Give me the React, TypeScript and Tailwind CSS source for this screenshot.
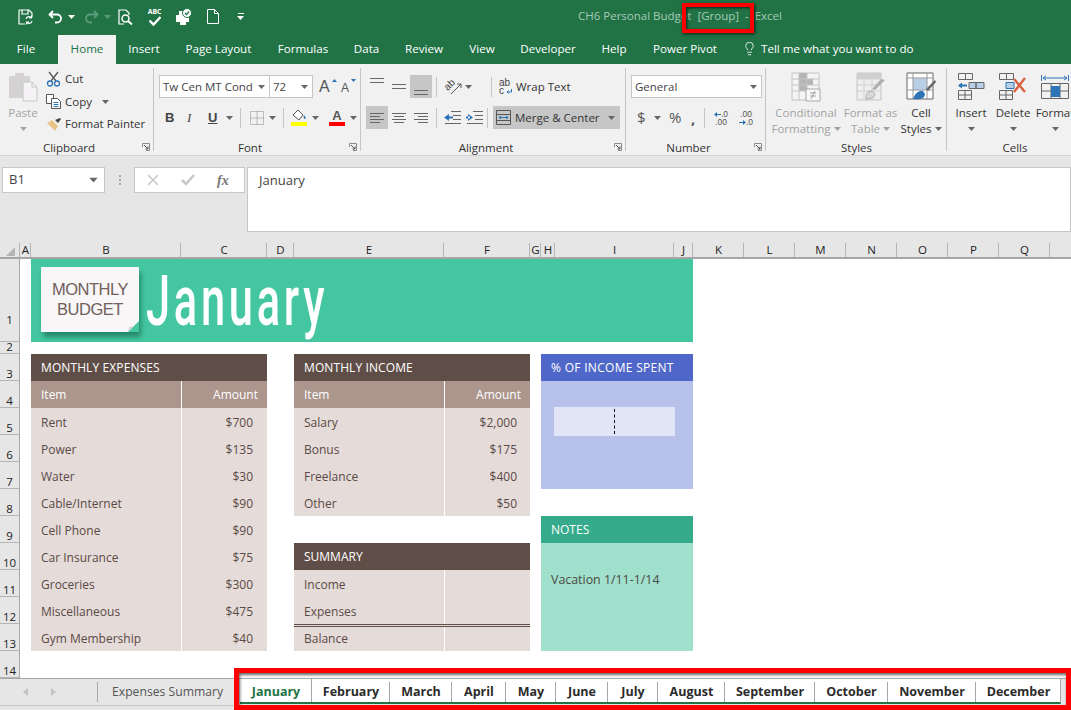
import React from 'react';
import { Lightbulb } from 'lucide-react';

const tabs = [
  { label: 'Insert', w: 'w-[56px]' },
  { label: 'Page Layout', w: 'w-[93px]' },
  { label: 'Formulas', w: 'w-[76px]' },
  { label: 'Data', w: 'w-[51px]' },
  { label: 'Review', w: 'w-[64px]' },
  { label: 'View', w: 'w-[52px]' },
  { label: 'Developer', w: 'w-[80px]' },
  { label: 'Help', w: 'w-[52px]' },
  { label: 'Power Pivot', w: 'w-[90px]' },
];

const columns = [
  { label: 'A', w: 'w-[11px]' },
  { label: 'B', w: 'w-[150px]' },
  { label: 'C', w: 'w-[86px]' },
  { label: 'D', w: 'w-[27px]' },
  { label: 'E', w: 'w-[150px]' },
  { label: 'F', w: 'w-[86px]' },
  { label: 'G', w: 'w-[11px]' },
  { label: 'H', w: 'w-[14px]' },
  { label: 'I', w: 'w-[119px]' },
  { label: 'J', w: 'w-[19px]' },
  { label: 'K', w: 'w-[51px]' },
  { label: 'L', w: 'w-[51px]' },
  { label: 'M', w: 'w-[51px]' },
  { label: 'N', w: 'w-[51px]' },
  { label: 'O', w: 'w-[51px]' },
  { label: 'P', w: 'w-[51px]' },
  { label: 'Q', w: 'w-[51px]' },
];

const rowHeads = [
  { label: '1', cls: 'h-[83px] pb-[15px]' },
  { label: '2', cls: 'h-[12px]' },
  ...Array.from({ length: 12 }, (_, i) => ({ label: String(i + 3), cls: 'h-[27px]' })),
];

const expenses = [
  ['Rent', '$700'],
  ['Power', '$135'],
  ['Water', '$30'],
  ['Cable/Internet', '$90'],
  ['Cell Phone', '$90'],
  ['Car Insurance', '$75'],
  ['Groceries', '$300'],
  ['Miscellaneous', '$475'],
  ['Gym Membership', '$40'],
];

const income = [
  ['Salary', '$2,000'],
  ['Bonus', '$175'],
  ['Freelance', '$400'],
  ['Other', '$50'],
];

const sheets = [
  { label: 'January', w: 'w-[72px]' },
  { label: 'February', w: 'w-[78px]' },
  { label: 'March', w: 'w-[62px]' },
  { label: 'April', w: 'w-[54px]' },
  { label: 'May', w: 'w-[50px]' },
  { label: 'June', w: 'w-[52px]' },
  { label: 'July', w: 'w-[50px]' },
  { label: 'August', w: 'w-[67px]' },
  { label: 'September', w: 'w-[90px]' },
  { label: 'October', w: 'w-[73px]' },
  { label: 'November', w: 'w-[88px]' },
  { label: 'December', w: 'w-[85px]' },
];

function Caret({ color = '#666666', className = '' }: { color?: string; className?: string }) {
  return (
    <svg width="7" height="4" viewBox="0 0 7 4" className={`shrink-0 ${className}`}>
      <path d="M0 0h7L3.5 4z" fill={color} />
    </svg>
  );
}

function Launcher() {
  return (
    <svg width="8" height="8" viewBox="0 0 8 8" className="absolute right-[3px] bottom-0">
      <path d="M.5 4V.5H7.5V7.5H4" fill="none" stroke="#8a8a8a" />
      <path d="M2 2l4 4M6 3.5V6H3.5" fill="none" stroke="#555" />
    </svg>
  );
}

function Sep() {
  return <div className="w-px h-[20px] bg-[#c6c6c6] shrink-0" />;
}

function Group({ label, w, launcher, children }: { label: string; w: string; launcher?: boolean; children: React.ReactNode }) {
  return (
    <div className={`${w} shrink-0 relative flex flex-col border-r border-[#c6c6c6] my-[4px] mr-[1px]`}>
      <div className="flex-1 min-h-0">{children}</div>
      <div className={`h-[10px] text-center text-[11.5px] leading-[14px] text-[#333] ${launcher ? 'pr-[15px]' : ''}`}>{label}</div>
      {launcher && <Launcher />}
    </div>
  );
}

function QuickIcons() {
  return (
    <div className="flex items-center h-[33px] pl-[18px]">
      <svg width="16" height="16" viewBox="0 0 16 16" fill="none" stroke="#fff" strokeWidth="1.2">
        <path d="M1 1h10l3 3v4M1 1v14h6M4 1v4h6V1" />
        <path d="M8 10a3 3 0 0 1 5.5-1M14 12a3 3 0 0 1-5.5 1M13.5 6.5V9H11M8.5 15.5V13H11" />
      </svg>
      <svg width="15" height="14" viewBox="0 0 15 14" fill="none" stroke="#fff" strokeWidth="1.8" className="ml-[14px]">
        <path d="M5 1L1.5 4.5 5 8M2 4.5h7a4 4 0 0 1 0 8H7" />
      </svg>
      <Caret color="#fff" className="ml-[5px]" />
      <svg width="15" height="14" viewBox="0 0 15 14" fill="none" stroke="#5c9b7b" strokeWidth="1.8" className="ml-[9px]">
        <path d="M10 1l3.5 3.5L10 8M13 4.5H6a4 4 0 0 0 0 8h2" />
      </svg>
      <Caret color="#5c9b7b" className="ml-[5px]" />
      <svg width="15" height="16" viewBox="0 0 15 16" fill="none" stroke="#fff" strokeWidth="1.2" className="ml-[7px]">
        <path d="M6 15H1V1h7l3 3v2" />
        <circle cx="7.5" cy="9.5" r="3.5" strokeWidth="1.5" />
        <path d="M10 12l4 3.5" strokeWidth="2" />
      </svg>
      <div className="ml-[13px] w-[17px] flex flex-col items-center">
        <span className="text-[7px] leading-[8px] font-bold text-white tracking-tight">ABC</span>
        <svg width="14" height="10" viewBox="0 0 14 10" fill="none" stroke="#fff" strokeWidth="2.4">
          <path d="M1.5 4.5L5.5 8.5 12.5 1" />
        </svg>
      </div>
      <svg width="18" height="17" viewBox="0 0 18 17" className="ml-[12px]">
        <path d="M1 7h3V3h6v4h4v7H11v3H5v-3H1z" fill="#fff" />
        <circle cx="12" cy="5" r="4.5" fill="#fff" stroke="#217346" />
        <path d="M10 5l1.5 1.5L14 3.5" fill="none" stroke="#217346" strokeWidth="1.3" />
      </svg>
      <svg width="12" height="15" viewBox="0 0 12 15" fill="none" stroke="#fff" className="ml-[14px]">
        <path d="M.5.5h7l4 4v10H.5zM7.5.5v4h4" />
      </svg>
      <div className="ml-[18px] flex flex-col items-center gap-[2px]">
        <div className="w-[6px] h-px bg-white" />
        <Caret color="#fff" />
      </div>
    </div>
  );
}

function AlignIcon({ lines, active }: { lines: string[]; active?: boolean }) {
  return (
    <div className={`w-[22px] h-[23px] flex flex-col justify-center gap-[2px] px-[4px] ${active ? 'bg-[#c6c6c6]' : ''}`}>
      {lines.map((c, i) => (
        <div key={i} className={`h-px bg-[#666] ${c}`} />
      ))}
    </div>
  );
}

function VAlignIcon({ pos, active }: { pos: string; active?: boolean }) {
  return (
    <div className={`w-[22px] h-[23px] flex flex-col gap-[3px] px-[4px] py-[3px] ${pos} ${active ? 'bg-[#c6c6c6]' : ''}`}>
      <div className="h-px bg-[#666]" />
      <div className="h-px bg-[#666]" />
    </div>
  );
}

function Clipboard() {
  return (
    <div className="flex h-full">
      <div className="w-[46px] flex flex-col items-center pt-[4px]">
        <svg width="30" height="30" viewBox="0 0 30 30">
          <path d="M1 4h6V1h9v3h6v22H1z" fill="#d4d2d3" />
          <path d="M15 10h9l5 5v14H15z" fill="#f5f3f5" stroke="#c8c8c8" />
          <path d="M24 10v5h5" fill="none" stroke="#c8c8c8" />
        </svg>
        <div className="text-[#a3a3a3] text-[11.5px] leading-[16px] mt-[3px]">Paste</div>
        <Caret color="#a3a3a3" className="mt-[6px]" />
      </div>
      <div className="flex flex-col -mt-[1px] text-[11.5px] text-[#333]">
        <div className="flex items-center h-[23px] gap-[3px]">
          <svg width="16" height="16" viewBox="0 0 16 16" fill="none">
            <path d="M3 1l7 9M12 1L5 10" stroke="#555" strokeWidth="1.3" />
            <circle cx="4" cy="12.5" r="2.5" stroke="#2b73b7" strokeWidth="1.3" />
            <circle cx="11" cy="12.5" r="2.5" stroke="#2b73b7" strokeWidth="1.3" />
          </svg>
          <span>Cut</span>
        </div>
        <div className="flex items-center h-[23px] gap-[3px]">
          <svg width="16" height="15" viewBox="0 0 16 15" fill="none" stroke="#555">
            <path d="M.5.5h7v9h-7z" fill="#fff" />
            <path d="M5.5 4.5h6l3 3v7h-9z" fill="#fff" />
            <path d="M7.5 8.5h5M7.5 10.5h5M7.5 12.5h5" stroke="#2b73b7" />
          </svg>
          <span>Copy</span>
          <Caret className="ml-[7px]" />
        </div>
        <div className="flex items-center h-[22px] gap-[3px]">
          <svg width="16" height="15" viewBox="0 0 16 15">
            <path d="M9 3l3 3 3-4-1-1z" fill="#444" />
            <path d="M6 3l6 6-3 5-8-8z" fill="#e7c48a" />
          </svg>
          <span className="whitespace-nowrap">Format Painter</span>
        </div>
      </div>
    </div>
  );
}

function Font() {
  return (
    <div className="h-full pl-[4px] pt-[7px]">
      <div className="flex items-center h-[23px]">
        <div className="w-[111px] h-[23px] bg-white border border-[#c6c6c6] flex items-center justify-between pl-[3px] pr-[4px] text-[11.5px] text-[#444] whitespace-nowrap">
          Tw Cen MT Cond <Caret />
        </div>
        <div className="w-[44px] h-[23px] -ml-px bg-white border border-[#c6c6c6] flex items-center justify-between pl-[3px] pr-[4px] text-[11.5px] text-[#444]">
          72 <Caret />
        </div>
        <div className="ml-[6px] w-[15px] relative text-[16px] leading-[16px] text-[#555] font-['Liberation_Sans',sans-serif]">
          A
          <svg width="5" height="3" viewBox="0 0 5 3" className="absolute right-[-3px] top-0"><path d="M0 3h5L2.5 0z" fill="#2b73b7" /></svg>
        </div>
        <div className="ml-[7px] w-[15px] relative text-[12px] leading-[14px] pt-[2px] text-[#555] font-['Liberation_Sans',sans-serif]">
          A
          <svg width="5" height="3" viewBox="0 0 5 3" className="absolute right-[0px] top-0"><path d="M0 0h5L2.5 3z" fill="#2b73b7" /></svg>
        </div>
      </div>
      <div className="flex items-center h-[23px] mt-[8px] text-[#444]">
        <span className="w-[10px] ml-[6px] text-[13px] font-bold font-['Liberation_Sans',sans-serif]">B</span>
        <span className="w-[10px] ml-[12px] text-[13px] italic font-['Liberation_Serif',serif]">I</span>
        <span className="w-[10px] ml-[11px] text-[13px] font-bold underline font-['Liberation_Sans',sans-serif]">U</span>
        <Caret className="ml-[8px]" />
        <div className="ml-[7px]"><Sep /></div>
        <svg width="14" height="14" viewBox="0 0 14 14" fill="none" stroke="#888" strokeDasharray="1 1" className="ml-[9px]">
          <path d="M.5.5h13v13H.5zM7 .5v13M.5 7h13" />
        </svg>
        <Caret className="ml-[5px]" />
        <div className="ml-[7px]"><Sep /></div>
        <div className="ml-[7px] w-[16px] flex flex-col items-center">
          <svg width="16" height="11" viewBox="0 0 16 11">
            <path d="M7 0l5 5-4 5-6-5z" fill="#fff" stroke="#555" />
            <path d="M13 5c2 2 2 4 1 4s-2-2-1-4z" fill="#2b73b7" />
          </svg>
          <div className="w-[16px] h-[4px] bg-[#ffff00] mt-[1px]" />
        </div>
        <Caret className="ml-[5px]" />
        <div className="ml-[10px] w-[16px] flex flex-col items-center">
          <span className="text-[13px] leading-[11px] font-bold text-[#555] font-['Liberation_Sans',sans-serif]">A</span>
          <div className="w-[16px] h-[4px] bg-[#ff0000] mt-[1px]" />
        </div>
        <Caret className="ml-[5px]" />
      </div>
    </div>
  );
}

function Alignment() {
  return (
    <div className="h-full pl-[4px] pt-[7px]">
      <div className="flex items-center h-[23px]">
        <VAlignIcon pos="justify-start" />
        <VAlignIcon pos="justify-center" />
        <VAlignIcon pos="justify-end" active />
        <div className="ml-[4px]"><Sep /></div>
        <div className="relative ml-[7px] w-[18px] h-[16px]">
          <span className="absolute left-0 top-[1px] -rotate-45 text-[10px] leading-[10px] text-[#444] font-['Liberation_Sans',sans-serif]">ab</span>
          <svg width="18" height="16" viewBox="0 0 18 16" fill="none" stroke="#555" className="absolute inset-0">
            <path d="M7 15L17 5M13 5h4v4" />
          </svg>
        </div>
        <Caret className="ml-[3px]" />
        <div className="ml-[19px]"><Sep /></div>
        <div className="ml-[7px] flex items-center gap-[4px] text-[11.5px] text-[#333] whitespace-nowrap">
          <div className="relative w-[13px] h-[16px] text-[10px] leading-[8px] text-[#444] font-['Liberation_Sans',sans-serif]">
            ab<br />c
            <svg width="6" height="5" viewBox="0 0 6 5" fill="none" stroke="#2b73b7" className="absolute right-0 bottom-[1px]">
              <path d="M5.5 0v3H1M2.5 1.500L1 3l1.500 1.500" />
            </svg>
          </div>
          Wrap Text
        </div>
      </div>
      <div className="flex items-center h-[23px] mt-[8px]">
        <AlignIcon active lines={['w-full', 'w-[10px]', 'w-full', 'w-[10px]']} />
        <AlignIcon lines={['w-full', 'w-[10px] self-center', 'w-full', 'w-[10px] self-center']} />
        <AlignIcon lines={['w-full', 'w-[10px] self-end', 'w-full', 'w-[10px] self-end']} />
        <div className="ml-[4px]"><Sep /></div>
        <svg width="17" height="13" viewBox="0 0 17 13" fill="none" className="ml-[7px]">
          <path d="M7 .5h10M9 4.5h8M9 8.5h8M1 12.5h16" stroke="#666" />
          <path d="M0 6.5L5 3v7z M4 5.5h5v2H4z" fill="#2b73b7" />
        </svg>
        <svg width="17" height="13" viewBox="0 0 17 13" fill="none" className="ml-[5px]">
          <path d="M7 .5h10M9 4.5h8M9 8.5h8M1 12.5h16" stroke="#666" />
          <path d="M7 6.5L2 3v7z M0 5.5h4v2H0z" fill="#2b73b7" />
        </svg>
        <div className="ml-[4px]"><Sep /></div>
        <div className="ml-[5px] w-[127px] h-[23px] bg-[#c6c6c6] flex items-center pl-[3px] text-[11.5px] text-[#333] whitespace-nowrap">
          <svg width="15" height="15" viewBox="0 0 15 15" fill="none" stroke="#555" className="mr-[4px]">
            <path d="M.5.5h14v14H.5zM.5 4.5h14M.5 10.5h14" />
            <path d="M3 7.5h9M3 7.5l2-1.500M3 7.5l2 1.500M12 7.5l-2-1.500M12 7.5l-2 1.500" stroke="#2b73b7" />
          </svg>
          Merge &amp; Center
          <Caret className="ml-auto mr-[5px]" />
        </div>
      </div>
    </div>
  );
}

function ArrowSmall({ dir }: { dir: 'left' | 'right' }) {
  return (
    <svg width="7" height="5" viewBox="0 0 7 5" className="inline-block align-baseline">
      <path d={dir === 'left' ? 'M0 2.5L3 0v2h4v1H3v2z' : 'M7 2.5L4 0v2H0v1h4v2z'} fill="#2b73b7" />
    </svg>
  );
}

function NumberGroup() {
  return (
    <div className="h-full pl-[4px] pt-[7px]">
      <div className="w-[131px] h-[23px] bg-white border border-[#c6c6c6] flex items-center justify-between pl-[3px] pr-[4px] text-[11.5px] text-[#444]">
        General <Caret />
      </div>
      <div className="flex items-center h-[23px] mt-[8px] text-[#555]">
        <span className="ml-[6px] w-[9px] text-[15px]">$</span>
        <Caret className="ml-[8px]" />
        <span className="ml-[8px] w-[16px] text-[15px]">%</span>
        <span className="ml-[6px] w-[5px] text-[15px] font-bold leading-[14px]">,</span>
        <div className="ml-[8px]"><Sep /></div>
        <div className="ml-[5px] w-[22px] text-[8.5px] leading-[8px] text-center font-['Liberation_Sans',sans-serif]">
          <ArrowSmall dir="left" />.0<br />.00
        </div>
        <div className="ml-[3px] w-[22px] text-[8.5px] leading-[8px] text-center font-['Liberation_Sans',sans-serif]">
          .00<br /><ArrowSmall dir="right" />.0
        </div>
      </div>
    </div>
  );
}

function CondIcon() {
  return (
    <svg width="30" height="30" viewBox="0 0 30 30">
      <path d="M1 1h27v27H1z" fill="#f4f4f4" stroke="#c4c4c4" />
      <path d="M8 1h8v6h6v6H16v6H8z" fill="#b5b5b5" />
      <path d="M1 7h27M1 13h27M1 19h27M8 1v27M16 1v27" stroke="#c4c4c4" />
      <path d="M15 17h14v12H15z" fill="#f8f8f8" stroke="#a8a8a8" />
      <path d="M19 21h6M19 24h6M24 19l-4 8" stroke="#a0a0a0" fill="none" />
    </svg>
  );
}

function TableIcon() {
  return (
    <svg width="30" height="30" viewBox="0 0 30 30">
      <path d="M1 1h24v27H1z" fill="#eee" stroke="#c4c4c4" />
      <path d="M1 1h24v6H1z" fill="#cfcfcf" />
      <path d="M1 7h24M1 13h24M1 19h24M8 1v27M16 1v27" stroke="#d0d0d0" />
      <path d="M29 8L19 18l-3-1 9-10z" fill="#aeaeae" />
      <path d="M16 19c-5 0-6 4-6 8 4 0 9-1 9-5z" fill="#d8d8d8" stroke="#aaa" />
    </svg>
  );
}

function StylesIcon() {
  return (
    <svg width="30" height="30" viewBox="0 0 30 30">
      <path d="M1 1h26v26H1z" fill="#fff" stroke="#666" />
      <path d="M7 6h14v12H7z" fill="#b9cfe7" />
      <path d="M1 6h26M7 1v26M21 1v26M1 18h26" stroke="#999" fill="none" />
      <path d="M29 8l-9 9 2 2 8-9z" fill="#666" />
      <path d="M17 19c-5-1-8 3-10 8 5 1 12 0 12-5z" fill="#2e75b6" />
    </svg>
  );
}

function Big({ icon, lines, dim, w, caretInline }: { icon: React.ReactNode; lines: string[]; dim?: boolean; w: string; caretInline?: boolean }) {
  return (
    <div className={`${w} shrink-0 flex flex-col items-center pt-[4px] text-[11.5px] leading-[16px] whitespace-nowrap ${dim ? 'text-[#a3a3a3]' : 'text-[#333]'}`}>
      <div className="h-[30px] mb-[3px]">{icon}</div>
      <div>{lines[0]}</div>
      {caretInline ? (
        <div className="flex items-center gap-[3px]">
          {lines[1]}
          <Caret color={dim ? '#a3a3a3' : '#666'} />
        </div>
      ) : (
        <Caret className="mt-[6px]" />
      )}
    </div>
  );
}

function InsertIcon() {
  return (
    <svg width="28" height="28" viewBox="0 0 28 28" fill="none" stroke="#666">
      <path d="M1.5 1.5h7v6h-7zM8.5 1.5h7v6h-7zM1.5 18.5h13v9h-13zM8 18.5v9M1.5 23h13" />
      <path d="M12 10.5h7v6h-7zM19 10.5h8v6h-8z" fill="#b9cfe7" />
      <path d="M2 13.5h8" stroke="#2e75b6" strokeWidth="2" />
      <path d="M1 13.5l4-3v6z" fill="#2e75b6" stroke="none" />
    </svg>
  );
}

function DeleteIcon() {
  return (
    <svg width="30" height="28" viewBox="0 0 30 28" fill="none" stroke="#666">
      <path d="M1.5 1.5h7v6h-7zM8.5 1.5h7v6h-7zM1.5 18.5h13v9h-13zM8 18.5v9M1.5 23h13" />
      <path d="M8 10.5h8v6H8z" fill="#b9cfe7" stroke="#2e75b6" />
      <path d="M16 7l11 13M27 6L16 20" stroke="#d9613f" strokeWidth="2.4" />
    </svg>
  );
}

function FormatIcon() {
  return (
    <svg width="28" height="30" viewBox="0 0 28 30" fill="none" stroke="#666">
      <path d="M2 6h24M2 6l3-2M2 6l3 2M26 6l-3-2M26 6l-3 2M.5 3v6M27.5 3v6" stroke="#2e75b6" />
      <path d="M.5 11.5h27v15H.5zM10 11.5v15M19 11.5v15M.5 19h27" />
      <path d="M10 14h9v11h-9z" fill="#2e75b6" stroke="none" />
    </svg>
  );
}

export default function App() {
  return (
    <div className="relative w-[1071px] h-[710px] overflow-hidden bg-white font-['Open_Sans',sans-serif] text-[12px]">
      {/* title bar */}
      <div className="h-[35px] bg-[#217346] flex justify-between">
        <QuickIcons />
        <div className="w-[493px] pt-[8px] text-[11.5px] leading-[16px] text-[#a7c9b6] whitespace-pre">CH6 Personal Budget  [Group]  -  Excel</div>
      </div>

      {/* tab row */}
      <div className="h-[29px] bg-[#217346] flex items-stretch text-white text-[11.6px] leading-[27px]">
        <div className="w-[58px] text-center pr-[6px]">File</div>
        <div className="w-[58px] bg-[#f1f1f1] text-[#217346] text-center">Home</div>
        {tabs.map(t => (
          <div key={t.label} className={`${t.w} text-center whitespace-nowrap`}>{t.label}</div>
        ))}
        <div className="ml-[12px] flex items-center gap-[4px] whitespace-nowrap -mt-[2px]">
          <Lightbulb size={15} strokeWidth={1.3} />
          Tell me what you want to do
        </div>
      </div>

      {/* ribbon */}
      <div className="h-[92px] bg-[#f1f1f1] border-b border-[#d2d2d2] flex overflow-hidden">
        <Group label="Clipboard" w="w-[154px]" launcher><Clipboard /></Group>
        <Group label="Font" w="w-[206px]" launcher><Font /></Group>
        <Group label="Alignment" w="w-[264px]" launcher><Alignment /></Group>
        <Group label="Number" w="w-[139px]" launcher><NumberGroup /></Group>
        <Group label="Styles" w="w-[180px]">
          <div className="flex h-full pl-[3px]">
            <Big w="w-[72px]" dim icon={<CondIcon />} lines={['Conditional', 'Formatting']} caretInline />
            <Big w="w-[57px]" dim icon={<TableIcon />} lines={['Format as', 'Table']} caretInline />
            <Big w="w-[44px]" icon={<StylesIcon />} lines={['Cell', 'Styles']} caretInline />
          </div>
        </Group>
        <div className="shrink-0 w-[200px] my-[4px] flex flex-col">
          <div className="flex-1 flex pl-[2px]">
            <Big w="w-[42px]" icon={<InsertIcon />} lines={['Insert']} />
            <Big w="w-[42px]" icon={<DeleteIcon />} lines={['Delete']} />
            <Big w="w-[42px]" icon={<FormatIcon />} lines={['Format']} />
          </div>
          <div className="h-[10px] w-[134px] text-center text-[11.5px] leading-[14px] text-[#333]">Cells</div>
        </div>
      </div>

      {/* formula bar */}
      <div className="h-[87px] bg-[#e6e6e6] flex items-start pt-[11px] pl-[2px]">
        <div className="w-[103px] h-[26px] bg-white border border-[#c6c6c6] flex items-center justify-between pl-[6px] pr-[7px] text-[13px] text-[#444]">
          B1 <Caret className="scale-125" />
        </div>
        <div className="w-[29px] h-[26px] flex flex-col items-center justify-center gap-[2px]">
          <div className="w-[2px] h-[2px] bg-[#aaa]" />
          <div className="w-[2px] h-[2px] bg-[#aaa]" />
          <div className="w-[2px] h-[2px] bg-[#aaa]" />
        </div>
        <div className="w-[111px] h-[26px] bg-white border border-[#c6c6c6] flex items-center pl-[12px] gap-[22px]">
          <svg width="12" height="12" viewBox="0 0 12 12" stroke="#c8c8c8" strokeWidth="1.5" fill="none"><path d="M1 1l10 10M11 1L1 11" /></svg>
          <svg width="14" height="12" viewBox="0 0 14 12" stroke="#c8c8c8" strokeWidth="2.5" fill="none"><path d="M1 6l4 4 8-9" /></svg>
          <span className="text-[14px] italic font-bold text-[#777] font-['Liberation_Serif',serif]">fx</span>
        </div>
        <div className="ml-[2px] flex-1 h-[65px] bg-white border border-[#c6c6c6] pl-[11px] pt-[3px] text-[13px] text-[#444]">January</div>
      </div>

      {/* column headers */}
      <div className="h-[16px] bg-[#e6e6e6] border-b-2 border-[#a6a6a6] flex text-[11.5px] leading-[14px] text-[#222]">
        <div className="w-[20px] shrink-0 border-r border-[#b5b5b5] flex items-end justify-end pr-[4px] pb-[1px]">
          <svg width="9" height="9" viewBox="0 0 9 9"><path d="M9 0v9H0z" fill="#b5b5b5" /></svg>
        </div>
        {columns.map(c => (
          <div key={c.label} className={`${c.w} shrink-0 text-center border-r border-[#b5b5b5] pl-[1px]`}>{c.label}</div>
        ))}
        <div className="flex-1" />
      </div>

      {/* sheet */}
      <div className="flex h-[419px]">
        <div className="w-[20px] shrink-0 bg-[#e6e6e6] border-r border-[#a6a6a6] text-[11.5px] text-[#222]">
          {rowHeads.map(r => (
            <div key={r.label} className={`${r.cls} flex items-end justify-center border-b border-[#b5b5b5] leading-[12px]`}>
              {r.label}
            </div>
          ))}
        </div>
        <div className="flex-1 grid grid-cols-[11px_150px_86px_27px_150px_86px_11px_14px_119px_19px_1fr] grid-rows-[83px_12px_repeat(12,27px)] text-[12px] text-[#5a4a45]">
          {/* banner */}
          <div className="col-start-2 col-span-9 row-start-1 bg-[#44c7a1] flex items-start pl-[10px] pt-[8px] overflow-hidden">
            <div className="relative w-[98px] h-[65px] shrink-0 bg-[#f8f6f6] shadow-[2px_5px_5px_rgba(0,60,40,0.45)] flex flex-col items-center justify-center pb-[2px] text-[16.5px] leading-[20px] text-[#6f605b] font-['Liberation_Sans',sans-serif]">
              <span className="tracking-[-0.5px]">MONTHLY</span>
              <span className="tracking-[-0.5px]">BUDGET</span>
              <svg width="11" height="11" viewBox="0 0 11 11" className="absolute right-0 bottom-0">
                <path d="M0 11L11 0V11z" fill="#44c7a1" />
                <path d="M0 11c1-3 1-4 1-5 3 1 8-3 10-6z" fill="#cfcfcf" />
              </svg>
            </div>
            <div className="ml-[7px] origin-left scale-x-[0.62] whitespace-nowrap text-[70px] leading-[70px] tracking-[6px] font-medium text-white font-['Roboto',sans-serif] -mt-[1px]">January</div>
          </div>

          {/* expenses */}
          <div className="col-start-2 col-span-2 row-start-3 row-span-11 bg-[#e5dbd9]">
            <div className="h-[27px] bg-[#5f4e48] text-white pl-[10px] leading-[27px] tracking-[0.1px]">MONTHLY EXPENSES</div>
            <div className="h-[27px] bg-[#ab958c] text-white flex leading-[28px]">
              <div className="w-[150px] pl-[10px]">Item</div>
              <div className="flex-1 border-l border-white text-right pr-[9px]">Amount</div>
            </div>
            {expenses.map(([name, amount]) => (
              <div key={name} className="h-[27px] flex leading-[29px]">
                <div className="w-[150px] pl-[10px]">{name}</div>
                <div className="flex-1 border-l border-white text-right pr-[14px]">{amount}</div>
              </div>
            ))}
          </div>

          {/* income */}
          <div className="col-start-5 col-span-2 row-start-3 row-span-6 bg-[#e5dbd9]">
            <div className="h-[27px] bg-[#5f4e48] text-white pl-[10px] leading-[27px] tracking-[0.1px]">MONTHLY INCOME</div>
            <div className="h-[27px] bg-[#ab958c] text-white flex leading-[28px]">
              <div className="w-[150px] pl-[10px]">Item</div>
              <div className="flex-1 border-l border-white text-right pr-[9px]">Amount</div>
            </div>
            {income.map(([name, amount]) => (
              <div key={name} className="h-[27px] flex leading-[29px]">
                <div className="w-[150px] pl-[10px]">{name}</div>
                <div className="flex-1 border-l border-white text-right pr-[13px]">{amount}</div>
              </div>
            ))}
          </div>

          {/* summary */}
          <div className="col-start-5 col-span-2 row-start-10 row-span-4 bg-[#e5dbd9]">
            <div className="h-[27px] bg-[#5f4e48] text-white pl-[10px] leading-[27px]">SUMMARY</div>
            <div className="h-[27px] flex leading-[29px]">
              <div className="w-[150px] pl-[10px]">Income</div>
              <div className="flex-1 border-l border-white" />
            </div>
            <div className="h-[27px] flex leading-[29px]">
              <div className="w-[150px] pl-[10px]">Expenses</div>
              <div className="flex-1 border-l border-white" />
            </div>
            <div className="h-[27px] flex leading-[23px] border-t-[3px] border-double border-[#5f4e48]">
              <div className="w-[150px] pl-[10px]">Balance</div>
              <div className="flex-1 border-l border-white" />
            </div>
          </div>

          {/* % of income */}
          <div className="col-start-8 col-span-3 row-start-3 row-span-5 bg-[#b7c1ea] flex flex-col">
            <div className="h-[27px] bg-[#4f67c8] text-white pl-[10px] leading-[28px] whitespace-nowrap tracking-[0.3px]">% OF INCOME SPENT</div>
            <div className="mt-[26px] ml-[13px] w-[121px] h-[29px] bg-[#e1e5f5] flex items-center justify-center">
              <div className="h-[25px] border-l border-dashed border-black" />
            </div>
          </div>

          {/* notes */}
          <div className="col-start-8 col-span-3 row-start-9 row-span-5 bg-[#a1e0cc]">
            <div className="h-[27px] bg-[#35ab8c] text-white pl-[10px] leading-[27px]">NOTES</div>
            <div className="pl-[10px] pt-[23px] leading-[27px] text-[12.4px] text-[#4a4a44] whitespace-nowrap">Vacation 1/11-1/14</div>
          </div>
        </div>
      </div>

      {/* sheet tabs */}
      <div className="h-[27px] bg-[#e6e6e6] border-t border-[#a6a6a6] flex items-stretch">
        <div className="w-[240px] shrink-0 flex items-center text-[#555]">
          <svg width="5" height="8" viewBox="0 0 5 8" className="ml-[23px]"><path d="M5 0v8L0 4z" fill="#c4c4c4" /></svg>
          <svg width="5" height="8" viewBox="0 0 5 8" className="ml-[23px]"><path d="M0 0v8l5-4z" fill="#c4c4c4" /></svg>
          <div className="ml-[41px] w-px h-[20px] bg-[#a6a6a6]" />
          <span className="ml-[14px] whitespace-nowrap text-[12.2px] text-[#555]">Expenses Summary</span>
        </div>
        <div className="w-[821px] shrink-0 flex bg-white h-[25px] border-b-2 border-[#217346] border-r border-r-[#a6a6a6] text-[12.5px] font-bold text-[#2b2b2b]">
          {sheets.map((s, i) => (
            <div key={s.label} className={`${s.w} shrink-0 text-center leading-[25px] whitespace-nowrap flex justify-center relative ${i === 0 ? 'text-[#217346]' : ''}`}>
              {s.label}
              <div className={`absolute right-0 bottom-0 w-px bg-[#a6a6a6] ${i === 0 ? 'top-0' : 'top-[3px]'}`} />
            </div>
          ))}
        </div>
      </div>
      <div className="h-[5px] bg-[#e6e6e6] border-t border-[#c6c6c6]" />

      {/* red callouts */}
      <div className="absolute left-[682px] top-[3px] w-[72px] h-[30px] border-[4px] border-[#ff0000] shadow-[1px_1px_3px_rgba(0,0,0,0.7),inset_1px_1px_3px_rgba(0,0,0,0.7)]" />
      <div className="absolute left-[234px] top-[668px] w-[837px] h-[42px] border-[5px] border-[#ff0000] shadow-[inset_1px_2px_3px_rgba(0,0,0,0.6)]" />
    </div>
  );
}
